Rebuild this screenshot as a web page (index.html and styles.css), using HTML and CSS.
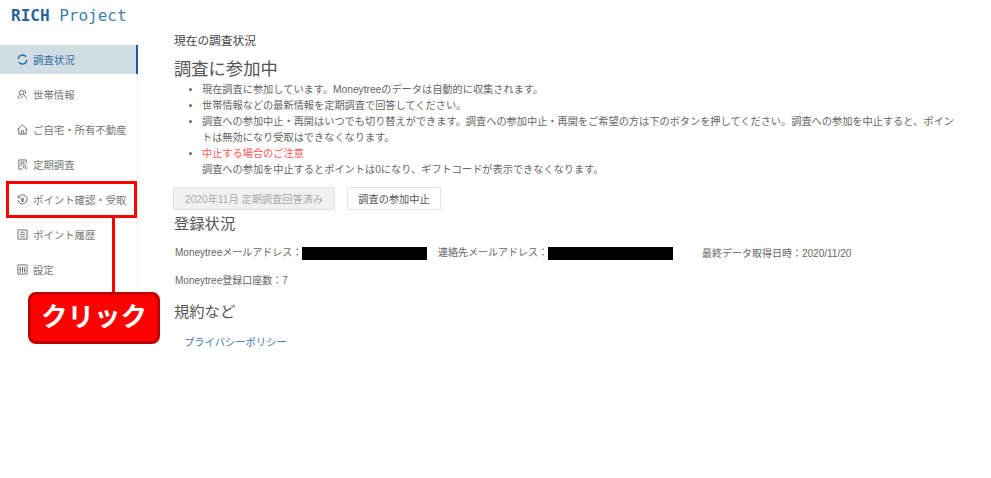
FILE: index.html
```html
<!DOCTYPE html>
<html lang="ja">
<head>
  <meta charset="UTF-8" />
  <title>RICH Project</title>
  <link rel="stylesheet" href="styles.css">
</head>
<body>

<div class="page">
  <aside class="sidebar">
    <div class="logo">RICH <span>Project</span></div>
    <nav class="menu">
      <a class="menu-item active">
        <svg viewBox="0 0 12 12"><path d="M9.9 3.2A4.7 4.7 0 0 0 1.3 5.600M2.100 8.800A4.700 4.700 0 0 0 10.700 6.400"/></svg>
        調査状況
      </a>
      <a class="menu-item">
        <svg viewBox="0 0 12 12"><circle cx="5" cy="4" r="2.500"/><path d="M1 10.500c.3-2 1-3.500 2.400-4.500M7 6c1.400 1 2.500 2.500 3.500 4.500M3.500 10.500c1-.8 2-1.800 2.800-3M8 1.800c1.500.3 2 2.200 1 3.400"/></svg>
        世帯情報
      </a>
      <a class="menu-item">
        <svg viewBox="0 0 12 12"><path d="M.5 6.200L6 1l5.500 5.200M2 5v6h8V5M4.700 11V7.500h2.600V11"/></svg>
        ご自宅・所有不動産
      </a>
      <a class="menu-item">
        <svg viewBox="0 0 12 12"><path d="M10 5V1H2v10h4M3.800 3.300h4.400M3.800 5.300h4.400M3.800 7.300h1.500"/><circle cx="8.300" cy="8.300" r="1.500"/><path d="M9.400 9.400L11 11"/></svg>
        定期調査
      </a>
      <a class="menu-item">
        <svg viewBox="0 0 12 12"><path d="M1.400 3.800A5 5 0 1 1 1 6.500M1.200 1.600v2.400h2.400M4.400 3.800L6 5.800l1.600-2M4.400 6.200h3.200M4.400 7.700h3.200M6 5.800v3"/></svg>
        ポイント確認・受取
      </a>
      <a class="menu-item">
        <svg viewBox="0 0 12 12"><path d="M1 1h10v10H1zM3.500 3.500h5M3.500 6h5M3.500 8.500h5"/></svg>
        ポイント履歴
      </a>
      <a class="menu-item">
        <svg viewBox="0 0 12 12"><path d="M1 1h10v10H1zM3.500 3v6.500M6 3v6.500M8.500 3v6.500M2.500 6h2M5 4.500h2M7.500 7h2"/></svg>
        設定
      </a>
    </nav>
  </aside>

  <main class="content">
    <div class="page-title">現在の調査状況</div>
    <h2 class="heading-status">調査に参加中</h2>
    <ul class="notes">
      <li>現在調査に参加しています。Moneytreeのデータは自動的に収集されます。</li>
      <li>世帯情報などの最新情報を定期調査で回答してください。</li>
      <li>調査への参加中止・再開はいつでも切り替えができます。調査への参加中止・再開をご希望の方は下のボタンを押してください。調査への参加を中止すると、ポイントは無効になり受取はできなくなります。</li>
      <li><span class="warn">中止する場合のご注意</span><br>調査への参加を中止するとポイントは0になり、ギフトコードが表示できなくなります。</li>
    </ul>
    <div class="actions">
      <button class="btn" disabled>2020年11月 定期調査回答済み</button>
      <button class="btn">調査の参加中止</button>
    </div>
    <h2 class="heading">登録状況</h2>
    <div class="info-row">
      <span class="info-a">Moneytreeメールアドレス：<i class="mask"></i></span>
      <span class="info-b">連絡先メールアドレス：<i class="mask"></i></span>
      <span>最終データ取得日時：2020/11/20</span>
    </div>
    <div class="info-count">Moneytree登録口座数：7</div>
    <h2 class="heading terms">規約など</h2>
    <a class="policy">プライバシーポリシー</a>
  </main>

  <div class="callout">
    <div class="callout-box"></div>
    <div class="callout-line"></div>
    <div class="callout-label">クリック</div>
  </div>
</div>

</body>
</html>
```

FILE: styles.css
```css
* {
  margin: 0;
  padding: 0;
  box-sizing: border-box;
}

body {
  background: #fff;
  font-family: 'Liberation Sans', 'Noto Sans CJK JP', sans-serif;
  color: #666;
}

.page {
  position: relative;
  display: flex;
  width: 991px;
  height: 478px;
  overflow: hidden;
}

.sidebar {
  width: 138px;
  flex: none;
}

.logo {
  height: 45px;
  padding: 6px 0 0 11px;
  font-family: 'DejaVu Sans Mono', monospace;
  font-size: 16px;
  line-height: 20px;
  font-weight: bold;
  color: #2a6496;
}

.logo span {
  font-weight: normal;
  color: #3f7fb0;
}

.menu {
  display: flex;
  flex-direction: column;
  gap: 6px;
  height: 240px;
  border-right: 1px solid #eceeef;
}

.menu-item {
  display: flex;
  align-items: center;
  gap: 5px;
  height: 29px;
  padding-left: 17px;
  font-size: 10.4px;
  color: #777;
}

.menu-item svg {
  width: 11px;
  height: 11px;
  flex: none;
  fill: none;
  stroke: #666;
  stroke-width: 1;
}

.menu-item.active {
  width: 138px;
  background: #d0dde2;
  border-right: 2px solid #1a5c9a;
  color: #2f6ea5;
}

.menu-item.active svg {
  stroke: #2f6ea5;
  stroke-width: 1.5;
}

.content {
  flex: 1;
  padding: 33px 0 0 36px;
  font-size: 10.2px;
}

.page-title {
  font-size: 11.7px;
  line-height: 16px;
  color: #444;
}

.heading-status, .heading {
  font-size: 15.3px;
  font-weight: normal;
  line-height: 22px;
  color: #555;
}

.heading-status {
  margin-top: 9px;
  font-size: 17.3px;
}

.notes {
  width: 787px;
  margin-top: 1.5px;
  padding-left: 28px;
  line-height: 16.1px;
}

.warn {
  color: #f55;
}

.actions {
  display: flex;
  gap: 12px;
  margin: 9px 0 0 -1px;
}

.btn {
  width: 94px;
  height: 23px;
  background: #fff;
  border: 1px solid #e2e2e2;
  border-radius: 2px;
  font: inherit;
  color: #555;
}

.btn:disabled {
  width: 162px;
  background: #f1f1f1;
  color: #aaa;
}

.heading {
  margin-top: 3px;
}

.info-row {
  display: flex;
  align-items: center;
  margin-top: 10px;
  padding-left: 1px;
  height: 14px;
  font-size: 10px;
}

.info-a {
  width: 263px;
}

.info-b {
  width: 264px;
}

.mask {
  display: inline-block;
  width: 125px;
  height: 13px;
  background: #000;
  vertical-align: middle;
}

.info-count {
  margin-top: 15px;
  padding-left: 1px;
  font-size: 10px;
  line-height: 14px;
}

.terms {
  margin-top: 13px;
}

.policy {
  display: block;
  margin-top: 11px;
  padding-left: 10px;
  font-size: 10.3px;
  color: #3f7fb0;
}

/* annotation drawn over the screenshot */
.callout-box {
  position: absolute;
  left: 6px;
  top: 181px;
  width: 131px;
  height: 37px;
  border: 3px solid #f00;
}

.callout-line {
  position: absolute;
  left: 112px;
  top: 218px;
  width: 3px;
  height: 75px;
  background: #f00;
}

.callout-label {
  position: absolute;
  left: 28px;
  top: 292px;
  width: 132px;
  height: 52px;
  background: #f00;
  border: 3px solid #c00000;
  border-radius: 8px;
  font-family: 'Noto Sans CJK JP', sans-serif;
  font-size: 26.5px;
  font-weight: bold;
  line-height: 39px;
  text-align: center;
  color: #fff;
}
```
